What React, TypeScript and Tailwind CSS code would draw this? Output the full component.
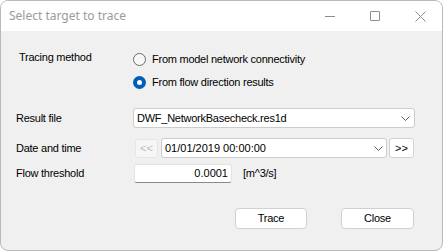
import React from 'react';

function Chevron() {
  return (
    <svg width="9" height="5" viewBox="0 0 9 5" className="shrink-0">
      <path d="M0.5 0.5 L4.5 4.5 L8.5 0.5" fill="none" stroke="#5f5f5f" strokeWidth="1" />
    </svg>
  );
}

function Radio({ checked, label }: { checked?: boolean; label: string }) {
  return (
    <div className="h-[20px] flex items-center">
      {checked ? (
        <span className="w-[13px] h-[13px] rounded-full bg-[#005fb8] flex items-center justify-center shrink-0">
          <span className="w-[5px] h-[5px] rounded-full bg-white" />
        </span>
      ) : (
        <span className="w-[13px] h-[13px] rounded-full border border-[#6a6a6a] bg-[#f7f7f7] shrink-0" />
      )}
      <span className="ml-[6px]">{label}</span>
    </div>
  );
}

function Row({ label, children, className = '' }: { label: string; children: React.ReactNode; className?: string }) {
  return (
    <div className={`flex items-center ${className}`}>
      <div className="w-[117px] shrink-0">{label}</div>
      {children}
    </div>
  );
}

export default function App() {
  return (
    <div className="w-[444px] h-[252px] bg-white">
      <div className="w-[443px] h-[251px] border border-[#b9b9b9] rounded-[8px] overflow-hidden flex flex-col bg-[#f0f0f0]">
        {/* Title bar */}
        <div className="h-[30px] bg-white flex items-center shrink-0">
          <span className="ml-[8px] text-[12px] text-[#9b9b9b] font-['Noto_Sans',sans-serif]">Select target to trace</span>
          <div className="ml-auto flex items-center">
            <span className="w-[10px] h-px bg-[#8c8c8c] mr-[35px]" />
            <span className="w-[10px] h-[10px] border border-[#8c8c8c] rounded-[1px] mr-[35px]" />
            <svg width="11" height="11" viewBox="0 0 11 11" className="mr-[16px]">
              <path d="M0.5 0.5 L10.5 10.5 M10.5 0.5 L0.5 10.5" stroke="#8c8c8c" strokeWidth="1" />
            </svg>
          </div>
        </div>

        {/* Body */}
        <div className="flex-1 pl-[15px] pt-[18px] text-[11px] leading-[13px] text-black tracking-[-0.25px] font-['Liberation_Sans',Arial,sans-serif]">
          <div className="flex">
            <div className="w-[117px] shrink-0 h-[16px] flex items-center pl-[3px]">Tracing method</div>
            <div className="flex flex-col gap-[3px]">
              <Radio label="From model network connectivity" />
              <Radio checked label="From flow direction results" />
            </div>
          </div>

          <Row label="Result file" className="mt-[16px]">
            <div className="w-[282px] h-[20px] bg-white border border-[#cccccc] rounded-[3px] flex items-center pl-[3px] pr-[4px]">
              <span className="flex-1">DWF_NetworkBasecheck.res1d</span>
              <Chevron />
            </div>
          </Row>

          <Row label="Date and time" className="mt-[10px]">
            <div className="flex items-center">
              <div className="ml-[2px] w-[23px] h-[19px] bg-[#f6f6f6] border border-[#e6e6e6] rounded-[3px] flex items-center justify-center text-[#bcbcbc] tracking-normal">&lt;&lt;</div>
              <div className="ml-[3px] w-[226px] h-[20px] bg-white border border-[#cccccc] rounded-[3px] flex items-center pl-[3px] pr-[3px] tracking-normal">
                <span className="flex-1">01/01/2019 00:00:00</span>
                <Chevron />
              </div>
              <div className="ml-[2px] w-[25px] h-[20px] bg-white border border-[#d2d2d2] rounded-[3px] flex items-center justify-center tracking-normal">&gt;&gt;</div>
            </div>
          </Row>

          <Row label="Flow threshold" className="mt-[6px]">
            <div className="ml-px w-[98px] h-[19px] bg-white border border-[#e3e3e3] border-b-[#8a8a8a] rounded-[3px] flex items-center justify-end pr-[3px] tracking-normal">0.0001</div>
            <span className="ml-[11px]">[m^3/s]</span>
          </Row>

          <div className="mt-[25px] flex">
            <div className="ml-[219px] w-[72px] h-[21px] bg-white border border-[#d0d0d0] rounded-[4px] flex items-center justify-center">Trace</div>
            <div className="ml-[34px] w-[73px] h-[21px] bg-white border border-[#d0d0d0] rounded-[4px] flex items-center justify-center">Close</div>
          </div>
        </div>
      </div>
    </div>
  );
}
